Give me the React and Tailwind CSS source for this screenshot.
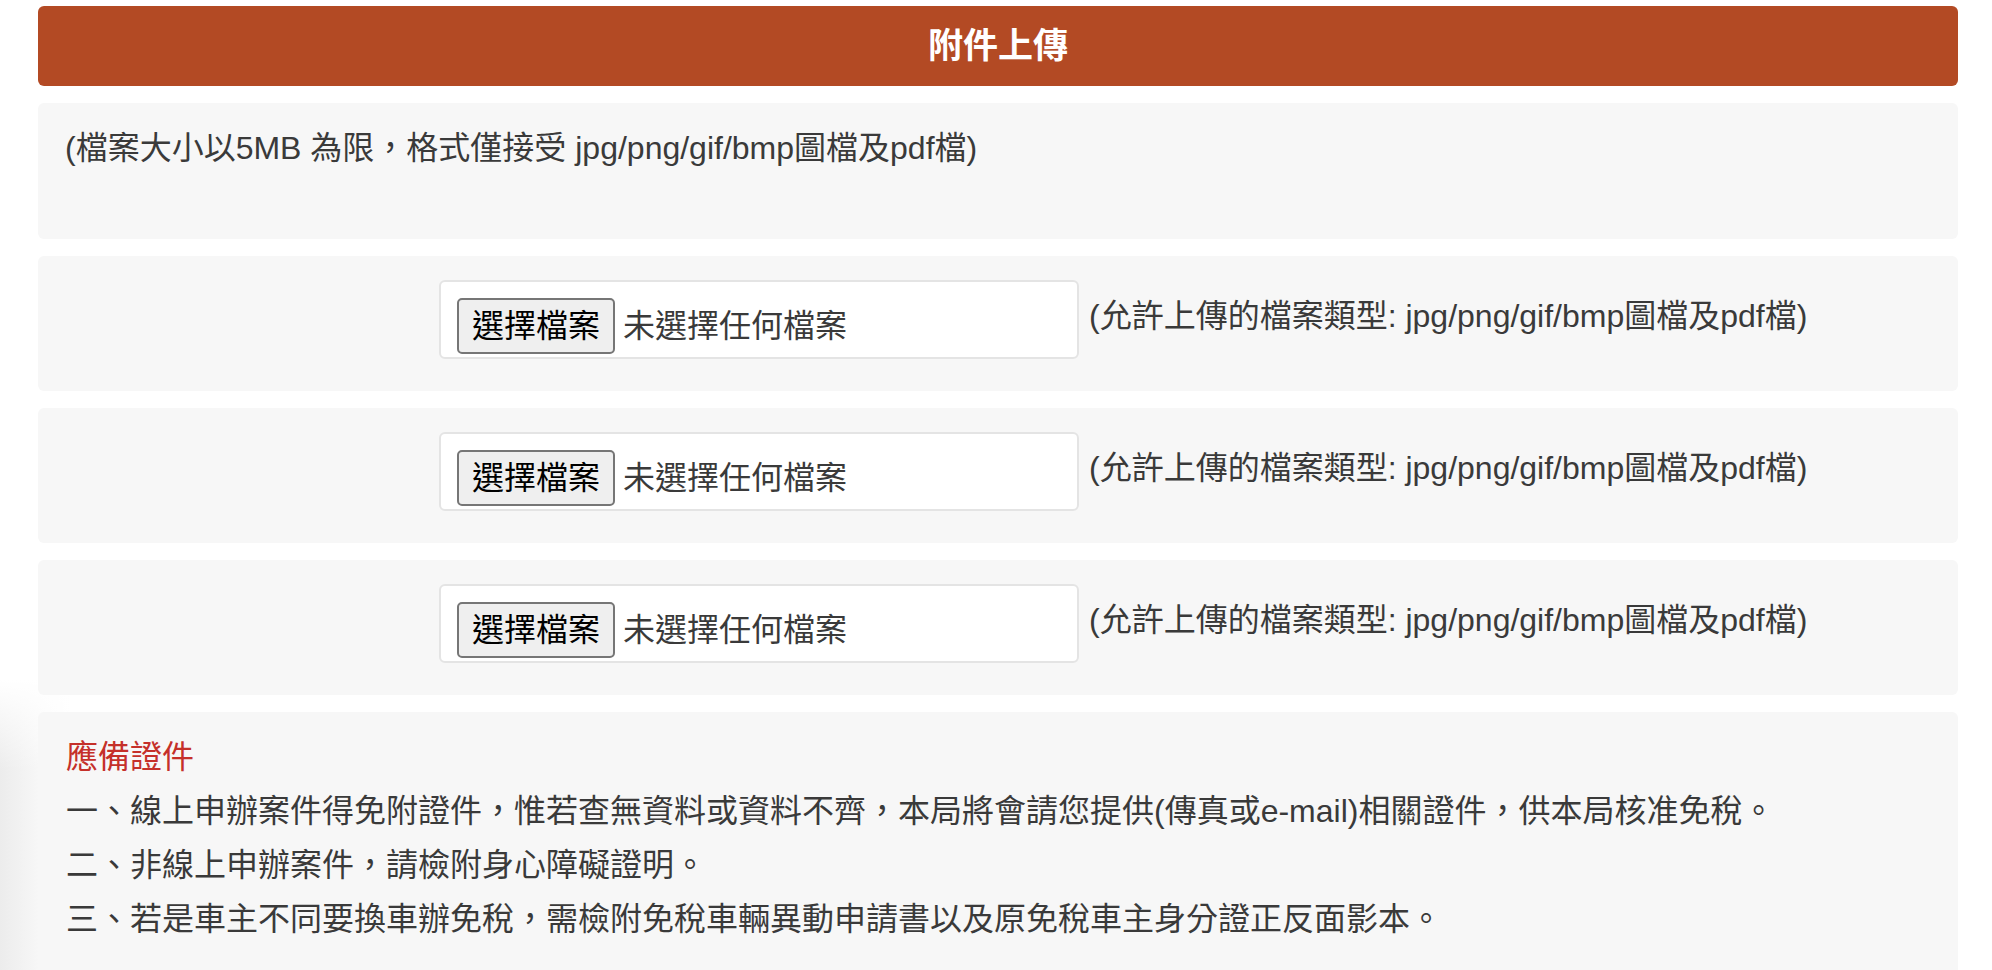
const font = { fontFamily: '"Liberation Sans", "Noto Sans CJK TC", sans-serif' };

function FileRow() {
  return (
    <div className="h-[135px] rounded-[6px] bg-[#f7f7f7] pt-[24px]">
      <div className="flex items-center">
        {/* file input */}
        <div className="ml-[401px] h-[79px] w-[640px] rounded-[6px] border-2 border-[#e4e4e4] bg-white pl-[16px] pt-[16px]">
          <div className="flex h-[56px] items-center">
            <button className="h-[56px] rounded-[5px] border-2 border-[#767676] bg-[#efefef] px-[13px] text-[32px] leading-none text-black">
              選擇檔案
            </button>
            <span className="ml-[8px] text-[32px] text-[#3a3a3a]">未選擇任何檔案</span>
          </div>
        </div>
        <span className="mb-[8px] ml-[10px] text-[32px] text-[#3a3a3a]">
          (允許上傳的檔案類型: jpg/png/gif/bmp圖檔及pdf檔)
        </span>
      </div>
    </div>
  );
}

export default function App() {
  return (
    <div className="relative h-[970px] w-[1992px] overflow-hidden bg-white" style={font}>
      {/* faint background shading on the left */}
      <div className="absolute left-0 top-[680px] h-[300px] w-[70px] bg-gradient-to-r from-[#ececec] via-[#f6f6f6] to-transparent" />
      <div className="absolute left-0 top-[680px] h-[90px] w-[70px] bg-gradient-to-b from-white to-transparent" />

      <div className="relative ml-[38px] flex w-[1920px] flex-col gap-[17px] pt-[6px]">
        <div className="flex h-[80px] items-center justify-center rounded-[6px] bg-[#b34a24]">
          <h2 className="text-[35px] font-bold text-white">附件上傳</h2>
        </div>

        <div className="h-[136px] rounded-[6px] bg-[#f7f7f7] pl-[27px] pt-[18px]">
          <p className="text-[32px] leading-[54px] text-[#3a3a3a]">
            (檔案大小以5MB 為限，格式僅接受 jpg/png/gif/bmp圖檔及pdf檔)
          </p>
        </div>

        <FileRow />
        <FileRow />
        <FileRow />

        <div className="h-[300px] rounded-[6px] bg-[#f7f7f7] pl-[28px] pt-[18px] text-[32px] leading-[54px] text-[#3a3a3a]">
          <p className="text-[#c5302a]">應備證件</p>
          <p>一、線上申辦案件得免附證件，惟若查無資料或資料不齊，本局將會請您提供(傳真或e-mail)相關證件，供本局核准免稅。</p>
          <p>二、非線上申辦案件，請檢附身心障礙證明。</p>
          <p>三、若是車主不同要換車辦免稅，需檢附免稅車輛異動申請書以及原免稅車主身分證正反面影本。</p>
        </div>
      </div>
    </div>
  );
}
